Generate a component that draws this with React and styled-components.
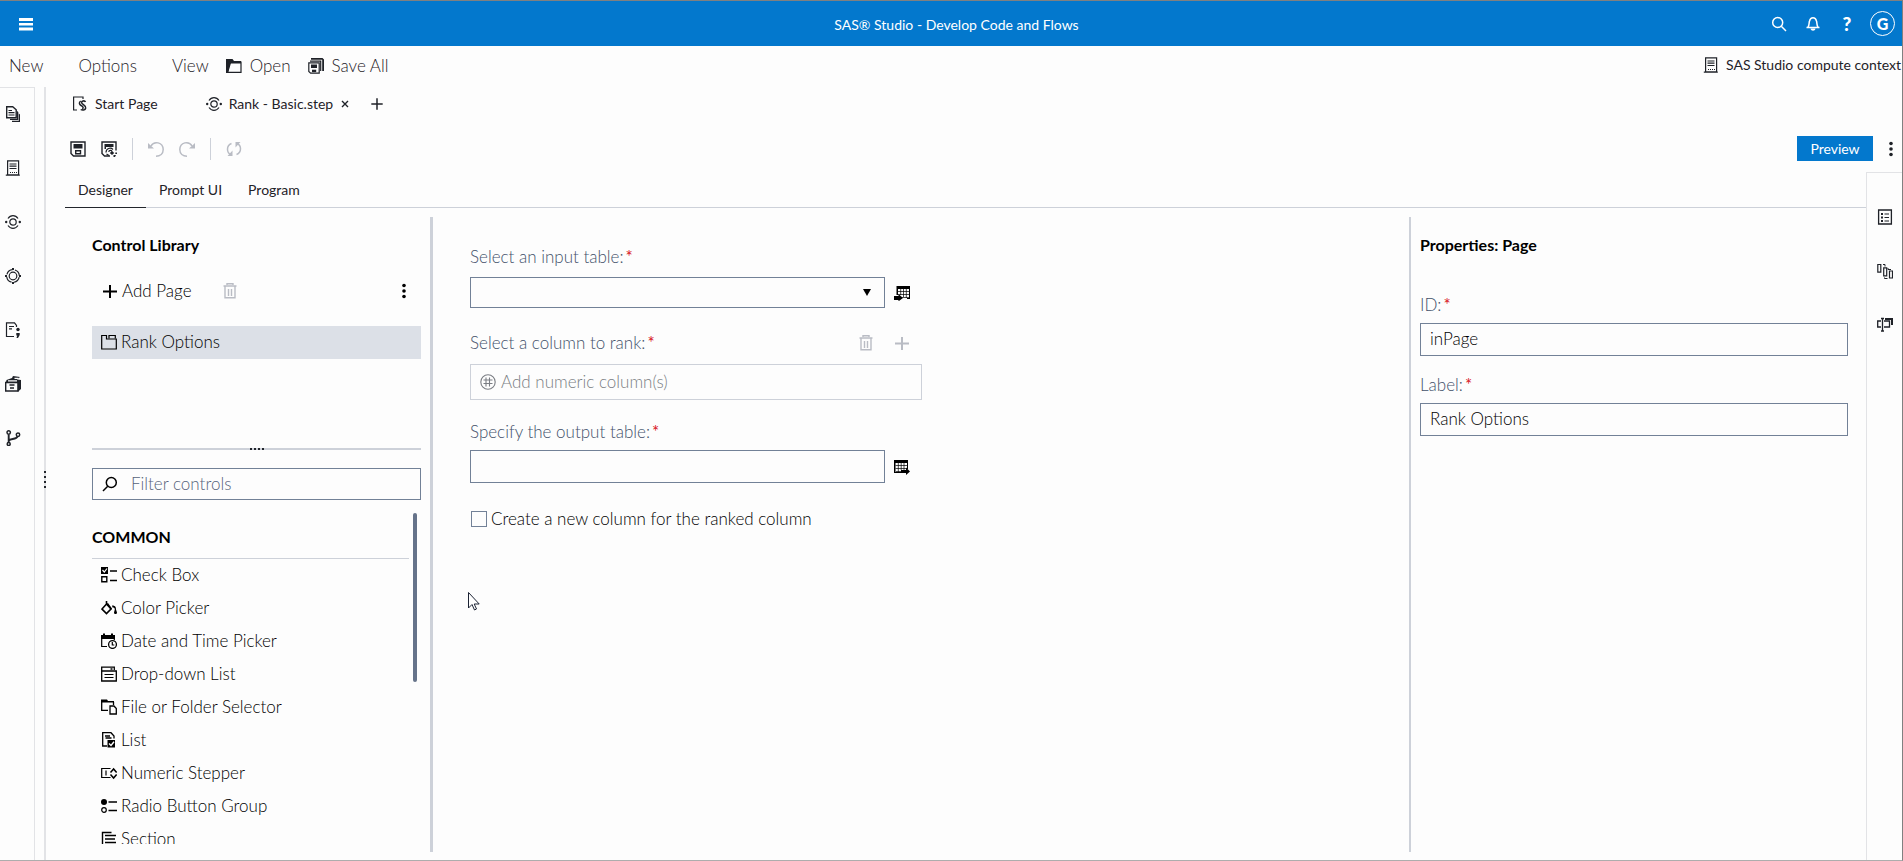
import React from "react";
import styled, { createGlobalStyle, css } from "styled-components";

const GlobalStyle = createGlobalStyle`
  *, *::before, *::after { box-sizing: border-box; }
  body {
    margin: 0;
    background: #fdfdfd;
    color: #1f2228;
    font-family: Lato, "Liberation Sans", sans-serif;
    font-size: 17px;
    font-weight: 300;
    line-height: 24px;
  }
  button, input, select { font: inherit; color: inherit; }
`;

const blue = "#0378cd";
const rule = "#cdd1d9";
const fieldBorder = "#728197";

/* ---------- icons ---------- */

const Svg = styled.svg`
  display: block;
  flex: none;
  fill: none;
  stroke: currentColor;
  stroke-width: 1.2;
`;

const Icon = ({ children, size = 16, ...rest }) => (
  <Svg width={size} height={size} viewBox="0 0 16 16" aria-hidden="true" {...rest}>
    {children}
  </Svg>
);

const solid = { fill: "currentColor", stroke: "none" };

const MenuIcon = () => (
  <Icon>
    <path {...solid} d="M1 2h14v3H1zM1 7h14v2.500H1zM1 11.500h14v3H1z" />
  </Icon>
);
const FolderIcon = () => (
  <Icon>
    <path {...solid} d="M0 1h6.500l1.500 2h7v2H5L2.500 13.500 1.500 15H0z" />
    <path d="M1 14V4h14v10.400H1.500L3.500 5h11.500" />
  </Icon>
);
const SaveAllIcon = () => (
  <Icon>
    <path {...solid} d="M3 0h11.500L16 1.500V13h-1.800V1.800H3z" />
    <path d="M.800 4.800h10.400v10.400H2.600L.800 13.500zM12.700 13V3.200H2" />
    <path {...solid} d="M3 6.500h6V10H3z" />
    <path d="M4.600 12.300h3v1.200h-3z" />
  </Icon>
);
const SaveIcon = () => (
  <Icon>
    <path strokeWidth="1.400" d="M1 1h14v14H3.500L1 12.500z" />
    <path {...solid} d="M3.500 3h9v4.500h-9z" />
    <path strokeWidth="1.400" d="M5.700 9.700h4.800v3H5.700z" />
  </Icon>
);
const SaveAsStepIcon = () => (
  <Icon>
    <path strokeWidth="1.400" d="M15 9.500V1H1v11.500L3.500 15H9" />
    <path {...solid} d="M3.500 3h9v3h-9zM3.500 6H5v2H3.500z" />
    <path d="M5 11.500c0-4 4.500-5.500 7-3M7.800 11c.2-2 2.700-2 3.200-.5M5.500 13l2.500 1.500" />
    <path {...solid} d="M11 10l2.200 2-2.200 2-2.200-2zM14.300 11.500H16V13h-1.700zM12.500 14h2.500l-1 2h-1.500z" />
  </Icon>
);
const UndoIcon = () => (
  <Icon>
    <path strokeWidth="1.500" d="M3 5C6-.5 15 1 15.200 8.500c0 4-3 6.700-7.200 6.700" />
    <path {...solid} d="M0 2v5.500h6z" />
  </Icon>
);
const RedoIcon = () => (
  <Icon>
    <path strokeWidth="1.500" d="M13 5C10-.5 1 1 .8 8.500c0 4 3 6.700 7.200 6.700" />
    <path {...solid} d="M16 2v5.500h-6z" />
  </Icon>
);
const RefreshIcon = () => (
  <Icon>
    <path strokeWidth="1.500" d="M5.500 2.500C0 4.500.500 12 5 13.500M10.500 13.500C16 11.500 15.500 4 11 2.500" />
    <path {...solid} d="M6.500 9.500v5.500H1.500zM9.500 6.500V1h5z" />
  </Icon>
);
const StartPageIcon = () => (
  <Icon>
    <path d="M11 3V1H1.600v13H5" />
    <path strokeWidth="1.500" d="M13.500 6c-.8-1.800-4.200-1.300-3.800.8.300 1.700 4.500 2.500 4 5.200-.4 2.300-3.500 2.500-5 1.500M8.700 5c-2 1.500-1.500 3.500.3 4.500l1.700 1.200c.8.8.300 1.800-.5 2" />
  </Icon>
);
const StepIcon = () => (
  <Icon>
    <circle cx="8" cy="8" r="3.200" />
    <path d="M3 4.500C5.500.7 10.500.7 13 4.500M3 11.500c2.500 3.800 7.500 3.800 10 0" />
    <circle {...solid} cx="1.200" cy="8" r="1.200" />
    <circle {...solid} cx="14.800" cy="8" r="1.200" />
  </Icon>
);
const TargetIcon = () => (
  <Icon>
    <circle cx="8" cy="8" r="3.800" />
    <circle cx="8" cy="8" r="6.300" strokeDasharray="7.400 2.496" strokeDashoffset="-1.250" />
    <path {...solid} d="M7 0h2v2H7zM7 14h2v2H7zM0 7h2v2H0zM14 7h2v2h-2z" />
  </Icon>
);
const FilesIcon = () => (
  <Icon>
    <path strokeWidth="1.400" d="M1.700.800h6l3.500 3v8H1.700z" />
    <path d="M3.500 4.500H7M3.500 6.700h6M3.500 9h6" />
    <path {...solid} d="M12 5l1.300 1v8H5v-1.200h7zM13.800 7.500L15 8.500V16H7v-1.300h6.800z" />
  </Icon>
);
const ServerIcon = () => (
  <Icon>
    <path d="M2.600.800h11v14h-11zM.800 15.200h14" />
    <path d="M4.500 4h7M4.500 6.200h7M4.500 8.500h7" />
    <path strokeDasharray="1 1" d="M5 12.500h7" />
  </Icon>
);
const SnippetIcon = () => (
  <Icon>
    <path d="M11.500 5V3.500l-2-2.700H1.500v13.700H9M4 4.500h5M4 6.800h3" />
    <circle {...solid} cx="13" cy="7.500" r="1.700" />
    <path {...solid} d="M11.300 11h3.400v2L13 16h-1.500l.7-2.500h-.9z" />
  </Icon>
);
const CabinetIcon = () => (
  <Icon>
    <path {...solid} d="M1.500 4L7 2l1-2 7 1-3 2.500 4 .5v9l-3.300 3V6H1z" />
    <path strokeWidth="1.400" d="M.700 6.500H13V15H.700z" />
    <path stroke="#fdfdfd" d="M3 4.900h9M9.500 2.300h4" />
    <path strokeWidth="1.600" d="M4.500 9h5M5 12h4" />
  </Icon>
);
const BranchIcon = () => (
  <Icon>
    <circle cx="3.700" cy="2.500" r="1.700" strokeWidth="1.500" />
    <circle cx="13" cy="4.700" r="1.700" strokeWidth="1.500" />
    <circle cx="3.700" cy="14" r="1.500" strokeWidth="1.500" />
    <path strokeWidth="1.900" d="M3.700 4.500v8.500M4 11c0-3 7.500-1 8.500-4.500" />
  </Icon>
);
const SearchIcon = ({ flip }) => (
  <Icon>
    <g transform={flip ? "translate(16 0) scale(-1 1)" : undefined} strokeWidth="1.500">
      <circle cx="6.700" cy="6.500" r="5" />
      <path d="M10.300 10.300L15 15" />
    </g>
  </Icon>
);
const BellIcon = () => (
  <Icon>
    <path strokeWidth="1.500" d="M1.500 11.500h13M3 11c1.500-2 .8-4 1.500-6C5.500.500 10.500.500 11.500 5c.7 2 0 4 1.500 6" />
    <path {...solid} d="M5.500 12.500h5c-.5 3-4.500 3-5 0z" />
  </Icon>
);
const PlusIcon = () => (
  <Icon>
    <path strokeWidth="2" d="M8 2v13M1 8.500h14" />
  </Icon>
);
const TabPlusIcon = () => (
  <Icon size={14}>
    <path strokeWidth="1.700" d="M8 1.500v13M1.500 8h13" />
  </Icon>
);
const CloseIcon = () => (
  <Icon size={8}>
    <path strokeWidth="2.800" d="M2 2l12 12M14 2L2 14" />
  </Icon>
);
const TrashIcon = () => (
  <Icon>
    <path strokeWidth="1.400" d="M5 2V.700h6V2M1.500 3h13M3 3.500v11.300h10V3.500M6.500 6v7M9.500 6v7" />
  </Icon>
);
const KebabIcon = () => (
  <Icon>
    <circle {...solid} cx="8" cy="2.500" r="1.800" />
    <circle {...solid} cx="8" cy="8" r="1.800" />
    <circle {...solid} cx="8" cy="13.500" r="1.800" />
  </Icon>
);
const PageIcon = () => (
  <Icon>
    <path d="M.700 1.500h4.800V5h9.800v10H.700z" />
    <path d="M8 4.500v-3h6.300v3" />
  </Icon>
);
const CheckBoxIcon = () => (
  <Icon>
    <path {...solid} d="M0 0h7v7H0z" />
    <path stroke="#fdfdfd" d="M1.500 3l1.800 2L6 1.500" />
    <path strokeWidth="1.400" d="M.800 9.800h5v5h-5zM9 4h7M9 13.500h7" />
  </Icon>
);
const ColorIcon = () => (
  <Icon>
    <path strokeWidth="1.600" d="M5.500 4L1 9l4.500 4.500L10 9 5.500 4V1" />
    <path {...solid} d="M5 4l2-1 4 5.500-1 1L7 6z" />
    <path {...solid} d="M11 5.500c4 0 4 2.500 4 4l1 3c0 2-3 2-3 0l.8-3c0-1.500-.8-2-2.300-2z" />
  </Icon>
);
const DateIcon = () => (
  <Icon>
    <path {...solid} d="M0 2h2V.500h2V2h6V.500h2V2h2v4H0z" />
    <path d="M.700 5v8.500H6M13.300 5v2" />
    <circle cx="11.500" cy="11.500" r="3.900" strokeWidth="1.300" />
    <path d="M11.300 9v3h2" />
  </Icon>
);
const DropDownIcon = () => (
  <Icon>
    <path strokeWidth="1.300" d="M.700 5V1.200h12.600V4M.700 5h14.600v10H.700zM9.500 3h2" />
    <path d="M3.500 8.500h9M3.500 11.500h9" />
  </Icon>
);
const FileFolderIcon = () => (
  <Icon>
    <path {...solid} d="M0 .500h6l1 1.500h6v1.500H0z" />
    <path strokeWidth="1.300" d="M.700 3v8.300H7M12.500 3v3M9 7h4l2.300 2.500V15H9z" />
  </Icon>
);
const ListIcon = () => (
  <Icon>
    <path strokeWidth="1.300" d="M6 14H1.700V.700H10l3 3.300v2.500M4 4h5M4.500 6h6" />
    <path {...solid} d="M6.500 8H14v7.500H6.500z" />
    <path stroke="#fdfdfd" strokeWidth="1.400" d="M8 11.500l2 2 3-3.700" />
  </Icon>
);
const StepperIcon = () => (
  <Icon>
    <path d="M9.500 3.500H.700v9h8.800M5 5.500v5" />
    <path strokeWidth="1.500" d="M9.500 7.500L12.600 4l3 3.500M9.500 9.500l3.100 3.500 3-3.500" />
  </Icon>
);
const RadioIcon = () => (
  <Icon>
    <circle {...solid} cx="3" cy="4" r="3" />
    <circle cx="3" cy="12" r="2.300" />
    <path d="M7.500 4H16M7.500 12.500H16" strokeWidth="1.500" />
  </Icon>
);
const SectionIcon = () => (
  <Icon>
    <path d="M1.500 15V1.500h9M4 4.500h11M4 8h10M4 11.500h11M4 14h10" strokeWidth="1.400" />
  </Icon>
);
const TableInIcon = () => (
  <Icon>
    <path {...solid} d="M2.500 1H16v13h-3v-1h2V4H4v6H2.500z" />
    <path d="M4 6.500h11M4 9.500h11M6 12.500h9M6.700 4v6M9.500 4v8M12.300 4v9" strokeWidth=".7" />
    <path {...solid} d="M0 11h4.500V9L9 13l-4.500 3.300V15H0z" />
  </Icon>
);
const TableOutIcon = () => (
  <Icon>
    <path {...solid} d="M0 1h14v9h-1V4H1.500v9H7v1H0z" />
    <path d="M1.500 6.500h11.500M1.500 9.500H13M2 12.500h5M4.300 4v9M7.200 4v7M10 4v7" strokeWidth=".7" />
    <path {...solid} d="M7 11h5V8.500l4 4-4 3.500v-2H7z" />
  </Icon>
);
const NumericIcon = () => (
  <Icon>
    <circle cx="8" cy="8" r="7.200" strokeWidth="1.100" />
    <path strokeWidth="1.100" d="M6 3.500v9M9.500 3.500v9M3.500 6h9M3.500 9.500h9" />
  </Icon>
);
const DetailsIcon = () => (
  <Icon>
    <path strokeWidth="1.300" d="M1.600 1h12.800v14H1.600z" />
    <path {...solid} d="M4 4h2v2H4zM4 7.500h2v2H4zM4 11h2v2H4z" />
    <path d="M7.500 5h4.500M7.500 8.500h4.500M7.500 12h4.500" />
  </Icon>
);
const FlowIcon = () => (
  <Icon>
    <path d="M.800 1.500h3v7.700h-3zM6.700 4.800h3v8h-3zM12.500 8h3v7h-3z" />
    <path d="M6 1.500h2v2M14 6.500h-3V5M7.500 14.500v1h3" strokeWidth="1" />
  </Icon>
);
const RenameIcon = () => (
  <Icon>
    <path strokeWidth="1.300" d="M4 4H.700v6H4M7 4h5.500v6H7M5.500 2v12M4 1.500h3M4 14h3" />
    <path {...solid} d="M8 1h8v7h-2V3H8z" />
  </Icon>
);

/* ---------- frame ---------- */

const Frame = styled.div`
  position: relative;
  display: flex;
  flex-direction: column;
  height: 100vh;
  overflow: hidden;
  border: solid #808080;
  border-width: 1px 1px 0 0;
  border-bottom: 1px solid #adadad;
`;

const Header = styled.header`
  display: grid;
  grid-template-columns: 1fr auto 1fr;
  align-items: center;
  flex: none;
  height: 45px;
  padding: 0 7px 0 18px;
  background: ${blue};
  color: #fff;
`;

const AppTitle = styled.h1`
  margin: 0;
  padding-top: 2px;
  font-size: 14px;
  font-weight: 400;
`;

const HeaderActions = styled.div`
  display: flex;
  justify-content: flex-end;
  align-items: center;
  gap: 18px;
`;

const IconButton = styled.button`
  display: flex;
  align-items: center;
  justify-content: center;
  width: ${(p) => p.$width || 16}px;
  height: 16px;
  padding: 0;
  border: 0;
  background: none;
  color: ${(p) => p.$color || "inherit"};
`;

const HelpButton = styled(IconButton)`
  font-size: 19px;
  font-weight: 900;
`;

const Avatar = styled.button`
  width: 25px;
  height: 25px;
  margin-left: -3px;
  padding: 0;
  border: 1px solid #fff;
  border-radius: 50%;
  background: none;
  font-size: 16px;
  font-weight: 900;
  line-height: 20px;
`;

const MenuBar = styled.nav`
  display: flex;
  align-items: center;
  flex: none;
  height: 41px;
  padding: 0 1px 2px 9px;
`;

const MenuButton = styled.button`
  display: flex;
  align-items: center;
  gap: 8px;
  margin-right: ${(p) => p.$after || 0}px;
  padding: 0;
  border: 0;
  background: none;
  white-space: nowrap;
`;

const Context = styled(MenuButton)`
  gap: 7px;
  margin-left: auto;
  padding-bottom: 2px;
  font-size: 14px;
  font-weight: 400;
`;

const Body = styled.div`
  display: flex;
  flex: 1;
  min-height: 0;
`;

const Rail = styled.nav`
  display: flex;
  flex-direction: column;
  flex: none;
  gap: 38px;
  border-top: 1px solid #e2e3e6;
  ${(p) =>
    p.$side === "left"
      ? css`
          width: 35px;
          padding: 18px 0 0 5px;
          border-right: 1px solid #e2e3e6;
        `
      : css`
          width: 36px;
          padding: 36px 0 0 10px;
          border-left: 1px solid #e2e3e6;
        `}
`;

const PaneHandle = styled.div`
  display: flex;
  flex-direction: column;
  align-items: center;
  justify-content: center;
  gap: 3px;
  flex: none;
  width: 2px;
  margin: 0 19px 0 9px;
  padding-top: 12px;
  background: #e2e3e6;
`;

const Dot = styled.span`
  flex: none;
  width: ${(p) => p.$size}px;
  height: ${(p) => p.$size}px;
  background: #23262c;
`;

const Workspace = styled.main`
  display: flex;
  flex-direction: column;
  flex: 1;
  min-width: 0;
`;

const FileTabs = styled.div`
  display: flex;
  align-items: center;
  flex: none;
  height: 40px;
  padding: 0 0 6px 7px;
`;

const FileTab = styled.button`
  display: flex;
  align-items: center;
  gap: 7px;
  margin-right: ${(p) => p.$after}px;
  padding: 0;
  border: 0;
  background: none;
  font-size: 14px;
  font-weight: 400;
`;

const Toolbar = styled.div`
  display: flex;
  align-items: center;
  flex: none;
  gap: 15px;
  height: 45px;
  padding: 0 3px 2px 5px;
`;

const Divider = styled.span`
  width: 1px;
  height: 22px;
  background: ${rule};
`;

const PreviewButton = styled.button`
  width: 76px;
  height: 25px;
  margin-left: auto;
  margin-right: -5px;
  padding: 0;
  border: 0;
  background: ${blue};
  color: #fff;
  font-size: 14px;
  font-weight: 400;
  line-height: 24px;
`;

const Split = styled.div`
  display: flex;
  flex: 1;
  min-height: 0;
`;

const Editor = styled.section`
  display: flex;
  flex-direction: column;
  flex: 1;
  min-width: 0;
`;

const ViewTabs = styled.div`
  display: flex;
  flex: none;
  height: 36px;
  border-bottom: 1px solid ${rule};
`;

const ViewTab = styled.button`
  height: 36px;
  padding: 0 13px;
  border: 0;
  border-bottom: 1px solid ${(p) => (p.$active ? "#23262c" : "transparent")};
  background: none;
  font-size: 14px;
  font-weight: 400;
`;

const Panels = styled.div`
  display: flex;
  flex: 1;
  min-height: 0;
  padding: 9px 0 8px;
`;

/* ---------- control library ---------- */

const Library = styled.aside`
  display: flex;
  flex-direction: column;
  flex: none;
  width: 368px;
  padding: 16px 9px 8px 27px;
  border-right: 3px solid ${rule};
`;

const PanelTitle = styled.h2`
  margin: 0;
  color: #000;
  font-size: 16px;
  font-weight: 700;
  line-height: 24px;
`;

const PageActions = styled.div`
  display: flex;
  align-items: center;
  gap: 30px;
  height: 32px;
  margin: 18px 0 19px;
  padding: 0 9px 0 10px;
  color: #000;

  & > :last-child { margin-left: auto; }
`;

const AddButton = styled(MenuButton)`
  gap: 4px;
`;

const PageList = styled.ul`
  flex: none;
  height: 124px;
  margin: 0;
  padding: 0;
  border-bottom: 2px solid ${rule};
  list-style: none;
`;

const PageItem = styled.li`
  display: flex;
  align-items: center;
  gap: 4px;
  height: 33px;
  padding: 0 0 1px 9px;
  background: #dce0e7;
  color: #000;
`;

const SplitDots = styled.div`
  display: flex;
  justify-content: center;
  flex: none;
  gap: 2px;
  height: 2px;
  margin: -2px 0 18px;
`;

const FilterBox = styled.label`
  display: flex;
  align-items: center;
  flex: none;
  gap: 13px;
  height: 32px;
  padding-left: 9px;
  border: 1px solid ${fieldBorder};
  color: #000;
`;

const FilterInput = styled.input`
  flex: 1;
  min-width: 0;
  padding: 0;
  border: 0;
  outline: 0;
  background: none;
  &::placeholder { color: #56637a; opacity: 1; }
`;

const ControlsArea = styled.div`
  display: flex;
  flex: 1;
  gap: 4px;
  min-height: 0;
  margin-top: 13px;
  padding-right: 4px;
`;

const Controls = styled.div`
  flex: 1;
  overflow: hidden;
`;

const GroupTitle = styled.h3`
  margin: 0;
  padding: 12px 0 9px;
  border-bottom: 1px solid ${rule};
  color: #000;
  font-size: 16px;
  font-weight: 700;
`;

const ControlList = styled.ul`
  margin: 0;
  padding: 0;
  color: #000;
  list-style: none;
`;

const ControlItem = styled.li`
  display: flex;
  align-items: center;
  gap: 4px;
  height: 33px;
  padding: 0 0 2px 9px;
`;

const ScrollThumb = styled.div`
  flex: none;
  width: 4px;
  height: 51%;
  border-radius: 2px;
  background: #66738a;
`;

/* ---------- form ---------- */

const Form = styled.form`
  flex: 1;
  padding: 28px 37px 0;
`;

const LabelRow = styled.div`
  display: flex;
  align-items: center;
  gap: 20px;
  max-width: 452px;
  height: 24px;
  padding-right: 12px;
  color: #b9bcc4;
`;

const Label = styled.label`
  display: block;
  flex: 1;
  height: 24px;
  color: #43516a;
`;

const Required = styled.span`
  margin-left: 2px;
  color: #d8151d;
  font-weight: 400;
`;

const FieldLine = styled.div`
  display: flex;
  align-items: center;
  gap: 9px;
  max-width: 440px;
  margin: ${(p) => p.$top}px 0 ${(p) => p.$bottom}px;
  color: #000;
`;

const SelectWrap = styled.div`
  position: relative;
  flex: 1;
`;

const Select = styled.select`
  display: block;
  width: 100%;
  height: 31px;
  padding: 0 8px;
  border: 1px solid ${fieldBorder};
  border-radius: 0;
  background: none;
  appearance: none;
`;

const Arrow = styled.svg`
  position: absolute;
  right: 14px;
  top: 12px;
  pointer-events: none;
`;

const TextInput = styled.input`
  display: block;
  flex: 1;
  width: 100%;
  height: 33px;
  padding: 0 9px 2px;
  border: 1px solid ${fieldBorder};
  background: none;
  color: #000;
`;

const ColumnBox = styled.button`
  display: flex;
  align-items: center;
  gap: 5px;
  width: 100%;
  max-width: 452px;
  height: 36px;
  margin: 9px 0 20px;
  padding: 0 9px 1px;
  border: 1px solid ${rule};
  background: none;
  color: #7a7d83;
`;

const CheckLabel = styled.label`
  display: flex;
  align-items: center;
  gap: 4px;
  color: #000;
`;

const CheckInput = styled.input`
  width: 16px;
  height: 16px;
  margin: 0 0 0 1px;
  border: 1px solid ${fieldBorder};
  appearance: none;
`;

const Properties = styled.aside`
  flex: none;
  width: 457px;
  padding: 16px 18px 0 9px;
  border-left: 2px solid ${rule};
`;

const Property = styled.div`
  margin-top: ${(p) => p.$top}px;
  & > input { margin-top: 6px; }
`;

const Pointer = styled.svg`
  position: absolute;
  left: 468px;
  top: 591px;
`;

/* ---------- data ---------- */

const leftRail = [
  ["Open files", FilesIcon],
  ["Servers", ServerIcon],
  ["Steps", StepIcon],
  ["Tasks", TargetIcon],
  ["Snippets", SnippetIcon],
  ["Libraries", CabinetIcon],
  ["Git repositories", BranchIcon],
];

const rightRail = [
  ["Details", DetailsIcon],
  ["Flow", FlowIcon],
  ["Rename", RenameIcon],
];

const controls = [
  ["Check Box", CheckBoxIcon],
  ["Color Picker", ColorIcon],
  ["Date and Time Picker", DateIcon],
  ["Drop-down List", DropDownIcon],
  ["File or Folder Selector", FileFolderIcon],
  ["List", ListIcon],
  ["Numeric Stepper", StepperIcon],
  ["Radio Button Group", RadioIcon],
  ["Section", SectionIcon],
];

const RailButtons = ({ items }) =>
  items.map(([name, Glyph]) => (
    <IconButton key={name} type="button" aria-label={name}>
      <Glyph />
    </IconButton>
  ));

const Dots = ({ size }) => [0, 1, 2, 3].map((n) => <Dot key={n} $size={size} />);

export default function App() {
  return (
    <>
      <GlobalStyle />
      <Frame>
        <Header>
          <IconButton type="button" aria-label="Menu">
            <MenuIcon />
          </IconButton>
          <AppTitle>SAS® Studio - Develop Code and Flows</AppTitle>
          <HeaderActions>
            <IconButton type="button" aria-label="Search"><SearchIcon /></IconButton>
            <IconButton type="button" aria-label="Notifications"><BellIcon /></IconButton>
            <HelpButton type="button">?</HelpButton>
            <Avatar type="button">G</Avatar>
          </HeaderActions>
        </Header>

        <MenuBar>
          <MenuButton type="button" $after={35}>New</MenuButton>
          <MenuButton type="button" $after={35}>Options</MenuButton>
          <MenuButton type="button" $after={17}>View</MenuButton>
          <MenuButton type="button" $after={17}><FolderIcon />Open</MenuButton>
          <MenuButton type="button"><SaveAllIcon />Save All</MenuButton>
          <Context type="button"><ServerIcon />SAS Studio compute context</Context>
        </MenuBar>

        <Body>
          <Rail $side="left"><RailButtons items={leftRail} /></Rail>
          <PaneHandle><Dots size={2} /></PaneHandle>

          <Workspace>
            <FileTabs>
              <FileTab type="button" $after={48}><StartPageIcon />Start Page</FileTab>
              <FileTab type="button" $after={8}><StepIcon />Rank - Basic.step</FileTab>
              <IconButton type="button" aria-label="Close tab" $width={8}><CloseIcon /></IconButton>
              <IconButton type="button" aria-label="New tab" $width={56}><TabPlusIcon /></IconButton>
            </FileTabs>

            <Toolbar>
              <IconButton type="button" aria-label="Save"><SaveIcon /></IconButton>
              <IconButton type="button" aria-label="Save as"><SaveAsStepIcon /></IconButton>
              <Divider />
              <IconButton type="button" aria-label="Undo" $color="#b9bcc4"><UndoIcon /></IconButton>
              <IconButton type="button" aria-label="Redo" $color="#b9bcc4"><RedoIcon /></IconButton>
              <Divider />
              <IconButton type="button" aria-label="Refresh" $color="#b9bcc4"><RefreshIcon /></IconButton>
              <PreviewButton type="button">Preview</PreviewButton>
              <IconButton type="button" aria-label="More"><KebabIcon /></IconButton>
            </Toolbar>

            <Split>
              <Editor>
                <ViewTabs>
                  <ViewTab type="button" $active>Designer</ViewTab>
                  <ViewTab type="button">Prompt UI</ViewTab>
                  <ViewTab type="button">Program</ViewTab>
                </ViewTabs>

                <Panels>
                  <Library>
                    <PanelTitle>Control Library</PanelTitle>
                    <PageActions>
                      <AddButton type="button"><PlusIcon />Add Page</AddButton>
                      <IconButton type="button" aria-label="Delete page" $color="#b9bcc4"><TrashIcon /></IconButton>
                      <IconButton type="button" aria-label="More page actions"><KebabIcon /></IconButton>
                    </PageActions>
                    <PageList>
                      <PageItem><PageIcon />Rank Options</PageItem>
                    </PageList>
                    <SplitDots><Dots size={2} /></SplitDots>
                    <FilterBox>
                      <SearchIcon flip />
                      <FilterInput type="text" placeholder="Filter controls" aria-label="Filter controls" />
                    </FilterBox>
                    <ControlsArea>
                      <Controls>
                        <GroupTitle>COMMON</GroupTitle>
                        <ControlList>
                          {controls.map(([name, Glyph]) => (
                            <ControlItem key={name}><Glyph />{name}</ControlItem>
                          ))}
                        </ControlList>
                      </Controls>
                      <ScrollThumb />
                    </ControlsArea>
                  </Library>

                  <Form>
                    <Label htmlFor="input-table">Select an input table:<Required>*</Required></Label>
                    <FieldLine $top={8} $bottom={23}>
                      <SelectWrap>
                        <Select id="input-table" />
                        <Arrow width="8" height="7" viewBox="0 0 8 7" aria-hidden="true">
                          <path d="M0 0h8L4 7z" />
                        </Arrow>
                      </SelectWrap>
                      <IconButton type="button" aria-label="Choose input table"><TableInIcon /></IconButton>
                    </FieldLine>

                    <LabelRow>
                      <Label htmlFor="rank-column">Select a column to rank:<Required>*</Required></Label>
                      <IconButton type="button" aria-label="Delete column"><TrashIcon /></IconButton>
                      <IconButton type="button" aria-label="Add column"><PlusIcon /></IconButton>
                    </LabelRow>
                    <ColumnBox id="rank-column" type="button"><NumericIcon />Add numeric column(s)</ColumnBox>

                    <Label htmlFor="output-table">Specify the output table:<Required>*</Required></Label>
                    <FieldLine $top={6} $bottom={24}>
                      <TextInput id="output-table" type="text" />
                      <IconButton type="button" aria-label="Choose output table"><TableOutIcon /></IconButton>
                    </FieldLine>

                    <CheckLabel>
                      <CheckInput type="checkbox" />
                      Create a new column for the ranked column
                    </CheckLabel>
                  </Form>

                  <Properties>
                    <PanelTitle>Properties: Page</PanelTitle>
                    <Property $top={36}>
                      <Label htmlFor="page-id">ID:<Required>*</Required></Label>
                      <TextInput id="page-id" type="text" defaultValue="inPage" />
                    </Property>
                    <Property $top={17}>
                      <Label htmlFor="page-label">Label:<Required>*</Required></Label>
                      <TextInput id="page-label" type="text" defaultValue="Rank Options" />
                    </Property>
                  </Properties>
                </Panels>
              </Editor>
              <Rail $side="right"><RailButtons items={rightRail} /></Rail>
            </Split>
          </Workspace>
        </Body>

        <Pointer width="12" height="19" viewBox="0 0 12 19" aria-hidden="true">
          <path d="M.5.500v15.500l3.500-3.500 2.500 5.500 2-1-2.300-5h5z" fill="#fff" stroke="#1b2233" />
        </Pointer>
      </Frame>
    </>
  );
}
